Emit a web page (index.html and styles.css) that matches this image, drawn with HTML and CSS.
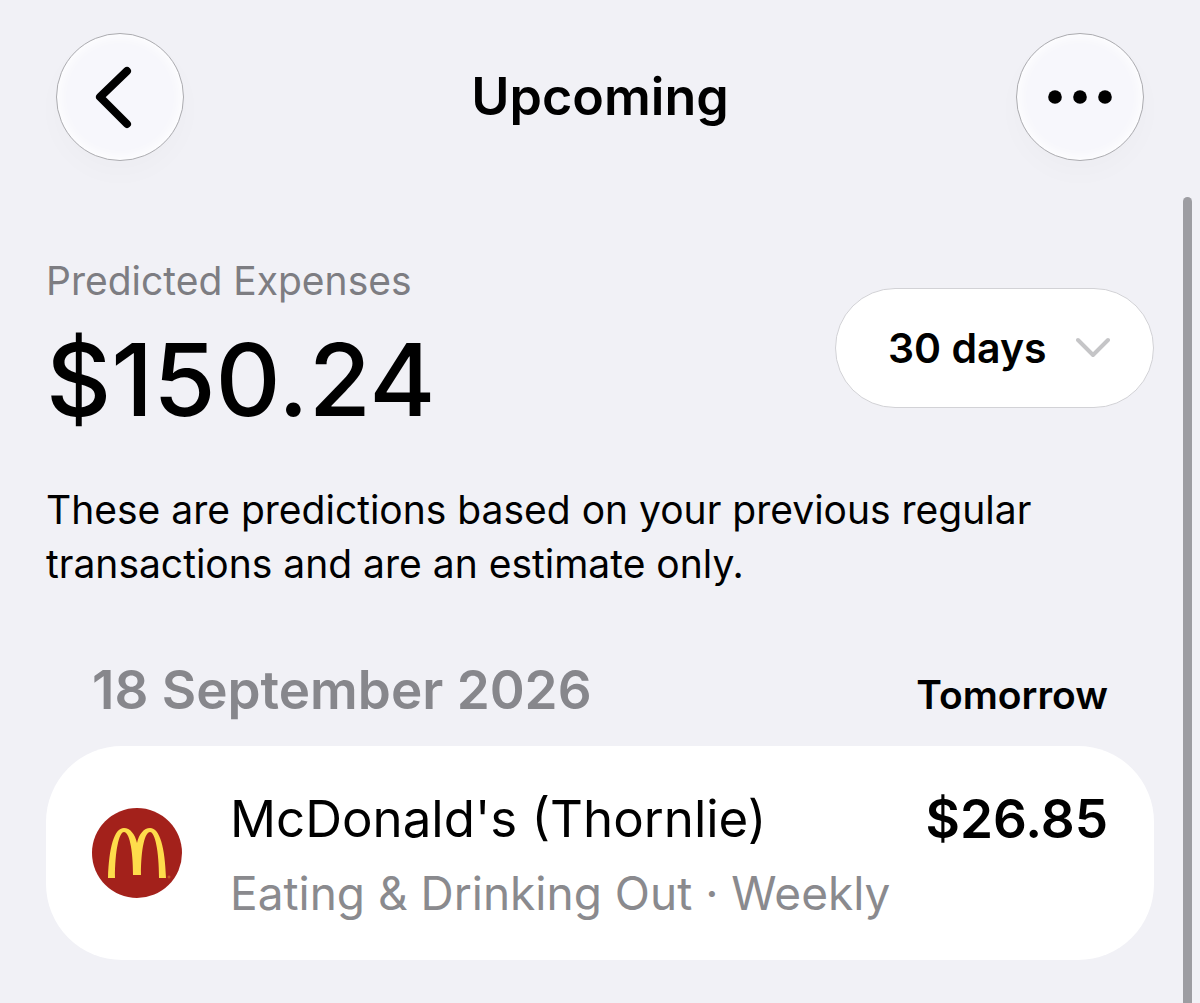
FILE: index.html
```html
<!DOCTYPE html>
<html lang="en">
<head>
    <meta charset="UTF-8">
    <meta name="viewport" content="width=device-width, initial-scale=1.0">
    <title>Upcoming</title>
    <link rel="stylesheet" href="styles.css">
</head>
<body>
    <header class="nav-bar">
        <button class="nav-button" type="button" aria-label="Back">
            <svg width="64" height="64" viewBox="0 0 64 64">
                <path d="M39 6 L12 32 L39 59" fill="none" stroke="#000" stroke-width="8" stroke-linecap="round" stroke-linejoin="round"/>
            </svg>
        </button>
        <h1>Upcoming</h1>
        <button class="nav-button" type="button" aria-label="More">
            <svg width="64" height="64" viewBox="0 0 64 64">
                <circle cx="7" cy="32" r="6.8"/>
                <circle cx="32" cy="32" r="6.8"/>
                <circle cx="57" cy="32" r="6.8"/>
            </svg>
        </button>
    </header>

    <main>
        <section class="summary">
            <div>
                <p class="summary-label">Predicted Expenses</p>
                <p class="summary-amount">$150.24</p>
            </div>
            <div class="period">
                <select class="period-select" aria-label="Period">
                    <option>30 days</option>
                </select>
                <svg class="period-arrow" width="34" height="22" viewBox="0 0 34 22">
                    <path d="M2 3 L17 18 L32 3" fill="none" stroke="#c5c5c7" stroke-width="4" stroke-linecap="round" stroke-linejoin="round"/>
                </svg>
            </div>
        </section>

        <p class="note">These are predictions based on your previous regular transactions and are an estimate only.</p>

        <section>
            <div class="day-header">
                <h2>18 September 2026</h2>
                <span class="day-relative">Tomorrow</span>
            </div>
            <article class="card">
                <svg class="merchant-logo" width="90" height="90" viewBox="0 0 90 90">
                    <circle cx="45" cy="45" r="45" fill="#a3211b"/>
                    <path fill="#fedc4b" d="M16 70 C17 40 22 20 32 20 C38 20 43 26 45 35 C47 26 52 20 58 20 C68 20 73 40 74 70 L67 70 C67 43 63 24 58 24 C53 24 49 40 49 67 L41 67 C41 40 37 24 32 24 C27 24 23 43 23 70 Z"/>
                    <circle cx="77" cy="69" r="1" fill="none" stroke="#c9652e"/>
                </svg>
                <div class="details">
                    <div class="details-top">
                        <h3>McDonald's (Thornlie)</h3>
                        <span class="amount">$26.85</span>
                    </div>
                    <p class="category">Eating &amp; Drinking Out · Weekly</p>
                </div>
            </article>
        </section>
    </main>

    <div class="scroll-indicator"></div>
</body>
</html>
```
FILE: styles.css
```css
* {
    box-sizing: border-box;
}
body {
    margin: 0;
    background: #f1f1f6;
    color: #000;
    font-family: Inter, "Liberation Sans", sans-serif;
}
h1, h2, h3, p {
    margin: 0;
}

/* top bar */
.nav-bar {
    display: flex;
    justify-content: space-between;
    align-items: center;
    padding: 33px 56px 0;
}
.nav-bar h1 {
    font-size: 52px;
    font-weight: 600;
    line-height: 60px;
}
.nav-button {
    display: flex;
    align-items: center;
    justify-content: center;
    width: 128px;
    height: 128px;
    padding: 0;
    border: 1px solid #acacb0;
    border-radius: 50%;
    background: #f7f7fc;
    box-shadow: inset 0 0 12px 2px #fff, 0 12px 28px rgba(0, 0, 0, 0.02);
}

main {
    padding: 96px 46px 43px;
}

/* total and period */
.summary {
    display: flex;
    justify-content: space-between;
    align-items: center;
}
.summary-label {
    margin-bottom: 14px;
    color: #7d7d82;
    font-size: 39px;
    line-height: 48px;
}
.summary-amount {
    font-size: 101px;
    font-weight: 500;
    line-height: 120px;
}
.period {
    position: relative;
}
.period-select {
    appearance: none;
    height: 120px;
    padding: 0 106px 0 52px;
    border: 1px solid #d2d2d6;
    border-radius: 60px;
    background: #fff;
    color: #000;
    font-family: inherit;
    font-size: 41px;
    font-weight: 600;
}
.period-arrow {
    position: absolute;
    top: 49px;
    right: 44px;
    pointer-events: none;
}

.note {
    margin-top: 44px;
    font-size: 39px;
    line-height: 54px;
}

/* transactions of one day */
.day-header {
    display: flex;
    justify-content: space-between;
    align-items: baseline;
    margin: 69px 0 26px;
    padding: 0 46px;
}
.day-header h2 {
    color: #87878c;
    font-size: 53px;
    font-weight: 600;
    line-height: 60px;
}
.day-relative {
    font-size: 39px;
    font-weight: 600;
}
.card {
    display: flex;
    align-items: center;
    gap: 48px;
    min-height: 214px;
    padding: 0 46px;
    border-radius: 76px;
    background: #fff;
}
.merchant-logo {
    flex: none;
}
.details {
    flex: 1;
    padding-top: 6px;
}
.details-top {
    display: flex;
    justify-content: space-between;
    line-height: 74px;
}
.details h3 {
    font-size: 51px;
    font-weight: 400;
}
.amount {
    font-size: 53px;
    font-weight: 600;
}
.category {
    color: #8a8a8e;
    font-size: 46px;
    line-height: 74px;
}

.scroll-indicator {
    position: fixed;
    top: 197px;
    right: 8px;
    bottom: -10px;
    width: 9px;
    border-radius: 5px;
    background: #9d9da2;
}
```
